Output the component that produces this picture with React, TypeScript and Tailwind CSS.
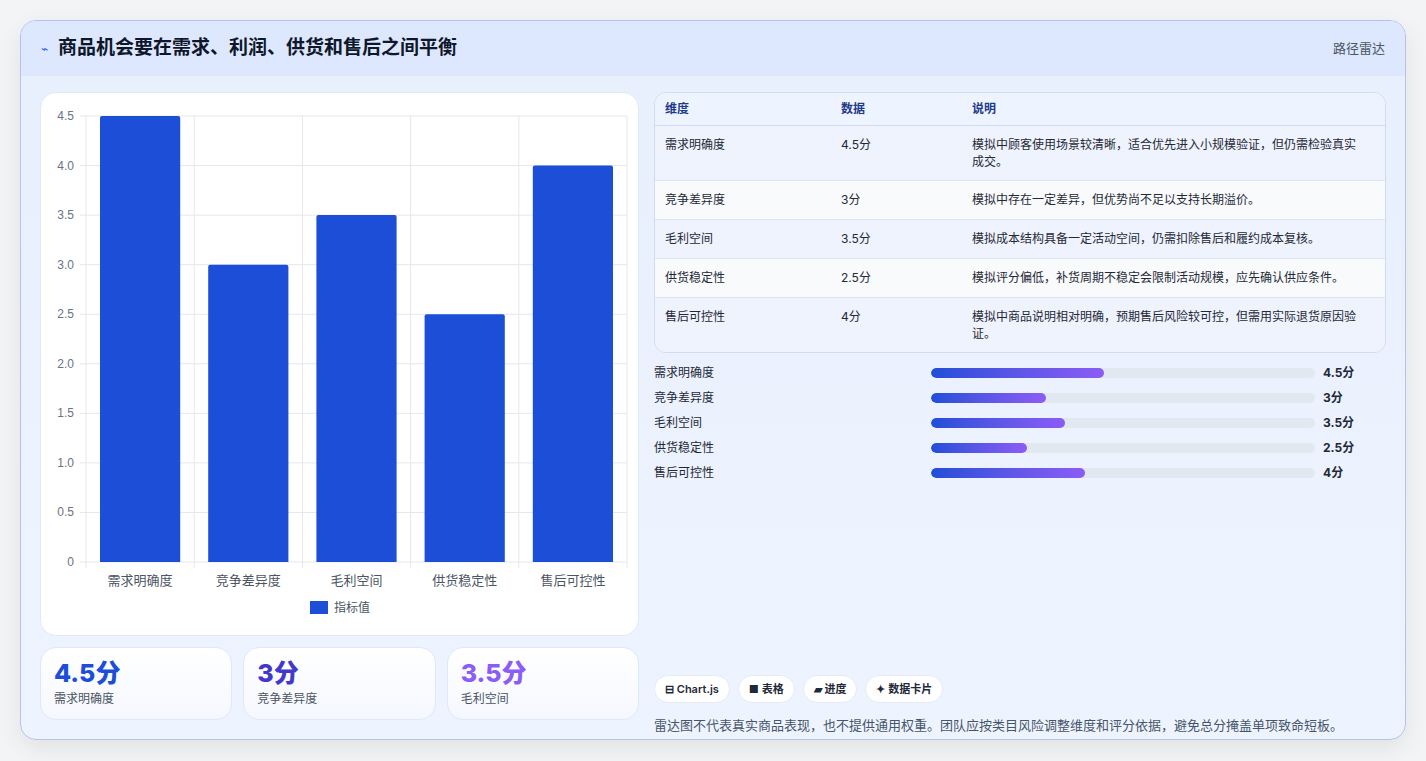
import React from "react";

const rows = [
  { k: "需求明确度", v: 4.5, d: "模拟中顾客使用场景较清晰，适合优先进入小规模验证，但仍需检验真实成交。" },
  { k: "竞争差异度", v: 3, d: "模拟中存在一定差异，但优势尚不足以支持长期溢价。" },
  { k: "毛利空间", v: 3.5, d: "模拟成本结构具备一定活动空间，仍需扣除售后和履约成本复核。" },
  { k: "供货稳定性", v: 2.5, d: "模拟评分偏低，补货周期不稳定会限制活动规模，应先确认供应条件。" },
  { k: "售后可控性", v: 4, d: "模拟中商品说明相对明确，预期售后风险较可控，但需用实际退货原因验证。" },
];

function Chart() {
  const W = 598, H = 544;
  const x0 = 45, x1 = 586, y0 = 469, yTop = 23;
  const unit = (y0 - yTop) / 4.5;
  const ticks = [0, 0.5, 1, 1.5, 2, 2.5, 3, 3.5, 4, 4.5];
  const cw = (x1 - x0) / 5;
  return (
    <svg width={W} height={H} style={{ fontFamily: "'Liberation Sans','Noto Sans CJK SC',sans-serif" }}>
      {ticks.map((t) => {
        const y = y0 - t * unit;
        return (
          <g key={t}>
            <line x1={x0 - 6} x2={x1} y1={y} y2={y} stroke="#e5e7eb" />
            <text x={x0 - 12} y={y + 4} fontSize="12" fill="#6b7280" textAnchor="end">{t === 0 ? "0" : t.toFixed(1)}</text>
          </g>
        );
      })}
      {[0, 1, 2, 3, 4, 5].map((i) => (
        <line key={i} x1={x0 + i * cw} x2={x0 + i * cw} y1={yTop} y2={y0 + 6} stroke="#e5e7eb" />
      ))}
      {rows.map((r, i) => {
        const h = r.v * unit;
        const bx = x0 + i * cw + 14;
        return (
          <g key={r.k}>
            <path d={`M${bx} ${y0} V${y0 - h + 2} Q${bx} ${y0 - h} ${bx + 2} ${y0 - h} H${bx + cw - 30} Q${bx + cw - 28} ${y0 - h} ${bx + cw - 28} ${y0 - h + 2} V${y0} Z`} fill="#1d4ed8" />
            <text x={x0 + i * cw + cw / 2} y={y0 + 23} fontSize="13" fill="#4b5563" textAnchor="middle" fontFamily="'Noto Sans CJK SC',sans-serif">{r.k}</text>
          </g>
        );
      })}
      <rect x={269} y={508} width={18} height={13} fill="#1d4ed8" />
      <text x={293} y={519} fontSize="12" fill="#4b5563" fontFamily="'Noto Sans CJK SC',sans-serif">指标值</text>
    </svg>
  );
}

export default function App() {
  const stats = [
    { v: "4.5分", l: "需求明确度", c: "text-[#1d4ed8]" },
    { v: "3分", l: "竞争差异度", c: "text-[#4338ca]" },
    { v: "3.5分", l: "毛利空间", c: "text-[#8b5cf6]" },
  ];
  return (
    <div className="w-[1426px] h-[761px] bg-[#f3f4f6] pt-5 px-5" style={{ fontFamily: "Inter,'Noto Sans CJK SC',sans-serif" }}>
      <div className="h-[720px] rounded-2xl border border-[#b4c3ee] bg-gradient-to-b from-[#e8effd] to-[#eef4ff] overflow-hidden shadow-[0_8px_24px_rgba(0,0,0,0.08)]">
        <div className="h-[55px] bg-[#dde7fd] flex items-center justify-between px-5">
          <div className="flex items-center gap-2.5">
            <span className="text-[#2563eb] text-xs">⌁</span>
            <span className="text-[19px] font-bold text-[#0f172a]">商品机会要在需求、利润、供货和售后之间平衡</span>
          </div>
          <span className="text-[13px] text-[#4b5563]">路径雷达</span>
        </div>
        <div className="flex gap-[15px] px-[19px] pt-[16px]">
          <div className="w-[599px] flex flex-col gap-[11px]">
            <div className="h-[544px] bg-white rounded-2xl border border-[#e2e8f6]">
              <Chart />
            </div>
            <div className="grid grid-cols-3 gap-[11px]">
              {stats.map((s) => (
                <div key={s.l} className="h-[73px] rounded-2xl bg-gradient-to-b from-white to-[#f5f8ff] border border-[#dfe7fa] px-[13px] pt-[10px]">
                  <div className={`text-[25px] leading-[30px] font-extrabold ${s.c}`}>{s.v}</div>
                  <div className="text-[12px] text-[#4b5563] mt-[2px]">{s.l}</div>
                </div>
              ))}
            </div>
          </div>
          <div className="flex-1 flex flex-col">
            <div className="rounded-xl border border-[#d3dbee] overflow-hidden text-[12px] text-[#1f2937]">
              <div className="flex bg-[#eef4ff] h-[33px] items-center border-b border-[#d3dbee] font-semibold text-[#1e3a8a]">
                <div className="w-[186px] pl-[10px]">维度</div>
                <div className="w-[131px]">数据</div>
                <div className="flex-1">说明</div>
              </div>
              {rows.map((r, i) => (
                <div key={r.k} className={`flex py-[10px] border-b last:border-b-0 border-[#dde4f2] ${i % 2 ? "bg-[#f8fafc]" : "bg-[#eef3fd]"}`}>
                  <div className="w-[186px] pl-[10px]">{r.k}</div>
                  <div className="w-[131px]">{r.v}分</div>
                  <div className="flex-1 pr-5 leading-[17px]">{r.d}</div>
                </div>
              ))}
            </div>
            <div className="flex flex-col gap-[8px] mt-[11px]">
              {rows.map((r) => (
                <div key={r.k} className="flex items-center h-[17px] text-[12px] text-[#1f2937]">
                  <div className="w-[277px]">{r.k}</div>
                  <div className="w-[384px] h-[10px] rounded-full bg-[#e2e8f0] overflow-hidden">
                    <div className="h-full rounded-full bg-gradient-to-r from-[#1d4ed8] to-[#8b5cf6]" style={{ width: `${r.v * 10}%` }} />
                  </div>
                  <div className="ml-2 font-bold">{r.v}分</div>
                </div>
              ))}
            </div>
            <div className="mt-[194px] flex gap-2 text-[11px] font-semibold text-[#1f2937]">
              {["⊟ Chart.js", "■ 表格", "▰ 进度", "✦ 数据卡片"].map((c) => (
                <span key={c} className="h-[28px] px-[10px] rounded-full bg-white border border-[#e5eaf5] flex items-center">{c}</span>
              ))}
            </div>
            <div className="mt-[13px] text-[13px] text-[#475569]">雷达图不代表真实商品表现，也不提供通用权重。团队应按类目风险调整维度和评分依据，避免总分掩盖单项致命短板。</div>
          </div>
        </div>
      </div>
    </div>
  );
}
